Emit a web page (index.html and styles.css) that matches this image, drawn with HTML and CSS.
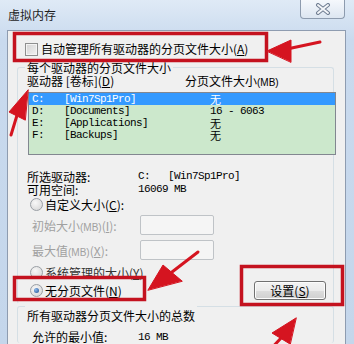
FILE: index.html
```html
<!DOCTYPE html>
<html>
  <head>
    <title>虚拟内存</title>
    <link rel="stylesheet" href="styles.css">
  </head>
  <body>
    <div class="window">
      <div class="titlebar">
        <span class="title">虚拟内存</span>
        <div class="close">
          <svg width="16" height="12" viewBox="0 0 16 12">
            <path d="M3 2 L13 10 M13 2 L3 10" stroke="#6f7d91" stroke-width="4" stroke-linecap="round" fill="none"/>
            <path d="M3 2 L13 10 M13 2 L3 10" stroke="#f4f6f9" stroke-width="2" stroke-linecap="round" fill="none"/>
          </svg>
        </div>
      </div>

      <div class="panel">
        <div class="check-row">
          <span class="checkbox"></span>
          <span>自动管理所有驱动器的分页文件大小(<u>A</u>)</span>
        </div>

        <fieldset class="group group-drives">
          <legend>每个驱动器的分页文件大小</legend>
          <div class="list-head">
            <span class="col-drive">驱动器 [卷标](<u>D</u>)</span>
            <span>分页文件大小<small>(MB)</small></span>
          </div>
          <div class="drive-list">
            <div class="drive-row selected"><span class="c1">C:</span><span class="c2">[Win7Sp1Pro]</span><span class="c3 cjk">无</span></div>
            <div class="drive-row"><span class="c1">D:</span><span class="c2">[Documents]</span><span class="c3">16 - 6063</span></div>
            <div class="drive-row"><span class="c1">E:</span><span class="c2">[Applications]</span><span class="c3 cjk">无</span></div>
            <div class="drive-row"><span class="c1">F:</span><span class="c2">[Backups]</span><span class="c3 cjk">无</span></div>
          </div>

          <div class="info">
            <div class="info-row"><span class="info-label">所选驱动器:</span><span class="mono">C:&nbsp;&nbsp;&nbsp;[Win7Sp1Pro]</span></div>
            <div class="info-row"><span class="info-label">可用空间:</span><span class="mono">16069 MB</span></div>
          </div>

          <div class="radio-row custom"><span class="radio"></span>自定义大小(<u>C</u>):</div>
          <div class="size-row first disabled"><span class="size-label">初始大小<small>(MB)</small>(<u>I</u>):</span><span class="textbox"></span></div>
          <div class="size-row disabled"><span class="size-label">最大值<small>(MB)</small>(<u>X</u>):</span><span class="textbox"></span></div>
          <div class="radio-row system"><span class="radio"></span>系统管理的大小(<u>Y</u>)</div>

          <div class="action-row">
            <div class="radio-row"><span class="radio on"></span>无分页文件(<u>N</u>)</div>
            <button class="btn" type="button">设置(<u>S</u>)</button>
          </div>
        </fieldset>

        <fieldset class="group group-total">
          <legend>所有驱动器分页文件大小的总数</legend>
          <div class="total-row"><span class="total-label">允许的最小值:</span><span class="mono">16 MB</span></div>
        </fieldset>
      </div>

      <!-- red annotation marks drawn over the dialog -->
      <svg class="marks" width="354" height="344" viewBox="0 0 354 344">
        <g fill="none" stroke="#c4121f" stroke-width="3.5">
          <rect x="14.5" y="33.5" width="252" height="27"/>
          <rect x="14.5" y="277.5" width="130" height="22"/>
          <rect x="241.5" y="266.5" width="101" height="38"/>
        </g>
        <g stroke="#d51420" stroke-width="3" stroke-linecap="round" fill="#d51420">
          <line x1="287" y1="49" x2="320" y2="42"/>
          <polygon points="267,51 291,40 291,62" stroke-width="1"/>

          <line x1="18" y1="112" x2="11" y2="135"/>
          <polygon points="28,90 9,112 25,120" stroke-width="1"/>

          <line x1="172" y1="272" x2="198" y2="252"/>
          <polygon points="148,290 163,265 182,281" stroke-width="1"/>

          <line x1="282" y1="337" x2="268" y2="352"/>
          <polygon points="296,318 272,333 290,344" stroke-width="1"/>
        </g>
      </svg>
    </div>
  </body>
</html>
```

FILE: styles.css
```css
body {
  margin: 0;
  background-color: #c8d9ed;
  font-family: "Noto Sans CJK SC", "Liberation Sans", sans-serif;
  font-size: 12px;
  color: #000;
}

.window {
  position: relative;
  width: 354px;
  height: 344px;
  overflow: hidden;
  background: linear-gradient(#dfeaf6, #c9daee 40px, #c4d6eb);
}

.titlebar {
  height: 30px;
  display: flex;
  justify-content: space-between;
  padding: 0 9px 0 8px;
}

.title {
  padding-top: 8px;
  line-height: 14px;
  font-size: 12px;
  color: #1e1e1e;
}

.close {
  width: 43px;
  height: 18px;
  border: 1px solid #8d9bae;
  border-top: none;
  border-radius: 0 0 4px 4px;
  background: linear-gradient(#f5f8fc, #dde6f1);
  display: flex;
  justify-content: center;
  align-items: center;
}

.panel {
  height: 313px;
  margin: 0 8px 0 7px;
  border: 1px solid #8e9cb0;
  border-bottom: none;
  background-color: #f0f0f0;
  overflow: hidden;
}

.check-row {
  display: flex;
  align-items: center;
  height: 14px;
  margin-top: 11px;
  padding-left: 17px;
  line-height: 14px;
}

.checkbox {
  width: 11px;
  height: 11px;
  margin-right: 3px;
  border: 1px solid #8e8f8f;
  background: linear-gradient(135deg, #d3d3d3, #f2f2f2);
  box-shadow: inset 0 0 0 1px #f4f4f4;
}

.group {
  margin: 0 11px 0 9px;
  padding: 0 0 0 9px;
  border: 1px solid #d5dfe5;
  border-radius: 3px;
  min-width: 0;
}

.group legend {
  padding: 0 2px;
  margin-left: -2px;
  line-height: 13px;
}

.group-drives {
  margin-top: 5px;
  padding-bottom: 3px;
  border-bottom-color: transparent;
}

.list-head {
  display: flex;
  margin-top: 1px;
  line-height: 12px;
}

.col-drive {
  width: 158px;
}

small {
  font-family: "Liberation Sans", sans-serif;
  font-size: 10px;
}

.drive-list {
  box-sizing: border-box;
  width: 308px;
  height: 63px;
  margin: 3px 0 0 1px;
  border: 1px solid #828790;
  background-color: #cce8cc;
}

.drive-row {
  display: flex;
  height: 12px;
  padding-left: 3px;
  line-height: 12px;
  font-family: "Liberation Mono", "Noto Sans CJK SC", monospace;
  font-size: 11px;
  letter-spacing: -0.6px;
}

.drive-row.selected {
  background-color: #3399ff;
  color: #fff;
}

.c1 {
  width: 32px;
}

.c2 {
  width: 146px;
}

.cjk {
  font-family: "Noto Sans CJK SC", sans-serif;
  font-size: 11px;
  letter-spacing: 0;
}

.mono {
  font-family: "Liberation Mono", monospace;
  font-size: 11px;
  letter-spacing: -0.6px;
}

.info {
  margin-top: 15px;
}

.info-row {
  display: flex;
  line-height: 13px;
}

.info-label {
  width: 111px;
}

.radio-row {
  display: flex;
  align-items: center;
  height: 13px;
  line-height: 13px;
}

.radio {
  box-sizing: border-box;
  width: 13px;
  height: 13px;
  margin: 0 2px 0 3px;
  border: 1px solid #9a9fa5;
  border-radius: 50%;
  background: radial-gradient(circle at 40% 35%, #f8f8f8, #d2d2d2);
  display: flex;
  justify-content: center;
  align-items: center;
}

.radio.on::after {
  content: "";
  width: 5px;
  height: 5px;
  border-radius: 50%;
  background: radial-gradient(circle at 35% 35%, #8ab8ec, #1f4f8f);
}

.radio-row.custom {
  margin-top: 2px;
}

.radio-row.system {
  margin-top: 6px;
  color: #333;
}

.size-row {
  display: flex;
  align-items: center;
  height: 20px;
  margin-top: 5px;
}

.size-row.first {
  margin-top: 4px;
}

.size-row.disabled {
  color: #a0a0a0;
}

.size-label {
  width: 108px;
  padding-left: 5px;
}

.textbox {
  box-sizing: border-box;
  width: 74px;
  height: 20px;
  border: 1px solid #bfc3c7;
  border-radius: 2px;
  background-color: #f5f5f5;
}

.action-row {
  display: flex;
  justify-content: space-between;
  align-items: center;
  height: 19px;
  margin-top: 2px;
}

.btn {
  box-sizing: border-box;
  width: 72px;
  height: 19px;
  margin-right: 7px;
  padding: 0;
  border: 1px solid #707070;
  border-radius: 3px;
  background: linear-gradient(#f3f3f3 0%, #ebebeb 50%, #dddddd 51%, #cfcfcf 100%);
  box-shadow: inset 0 0 0 1px #fcfcfc;
  font-family: "Noto Sans CJK SC", sans-serif;
  font-size: 12px;
  line-height: 17px;
  color: #000;
}

.group-total {
  margin-top: -14px;
  border-bottom: none;
}

.group-total legend {
  padding-top: 20px;
  line-height: 12px;
}

.total-row {
  display: flex;
  margin-top: 9px;
  padding-left: 5px;
  line-height: 12px;
}

.total-label {
  width: 106px;
}

.marks {
  position: absolute;
  top: 0;
  left: 0;
  pointer-events: none;
}
```
